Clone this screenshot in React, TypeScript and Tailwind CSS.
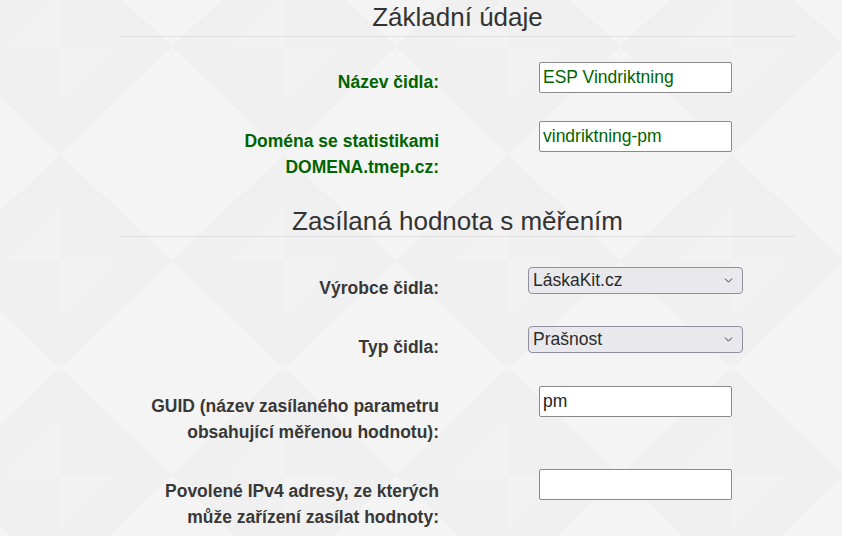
import { ChevronDown } from 'lucide-react'

type Row = {
  label: string[]
  kind: 'input' | 'select'
  value: string
  gap?: string
}

const basic: Row[] = [
  { label: ['Název čidla:'], kind: 'input', value: 'ESP Vindriktning' },
  { label: ['Doména se statistikami', 'DOMENA.tmep.cz:'], kind: 'input', value: 'vindriktning-pm' },
]

const measured: Row[] = [
  { label: ['Výrobce čidla:'], kind: 'select', value: 'LáskaKit.cz' },
  { label: ['Typ čidla:'], kind: 'select', value: 'Prašnost' },
  { label: ['GUID (název zasílaného parametru', 'obsahující měřenou hodnotu):'], kind: 'input', value: 'pm' },
  { label: ['Povolené IPv4 adresy, ze kterých', 'může zařízení zasílat hodnoty:'], kind: 'input', value: '', gap: 'mt-[7px]' },
]

function Backdrop() {
  return (
    <svg className="absolute inset-0 h-full w-full" aria-hidden="true">
      <defs>
        <pattern id="tiles" width="224" height="214" patternUnits="userSpaceOnUse" x="60" y="47">
          <rect width="224" height="214" fill="#f0f0f0" />
          <polygon points="112,0 224,107 112,214 0,107" fill="#f4f4f4" />
          <polygon points="0,0 56,0 0,54" fill="#f2f2f2" />
          <polygon points="224,214 168,214 224,160" fill="#f2f2f2" />
        </pattern>
      </defs>
      <rect width="100%" height="100%" fill="url(#tiles)" />
    </svg>
  )
}

function FormRow({ row, green }: { row: Row; green?: boolean }) {
  return (
    <div className="flex">
      <div
        className={`w-[319px] shrink-0 pt-[16px] pb-[17px] text-right text-[17.5px] font-bold leading-[26px] ${
          green ? 'text-[#006400]' : 'text-[#383838]'
        }`}
      >
        {row.label.map((line) => (
          <div key={line}>{line}</div>
        ))}
      </div>
      <div className="ml-[37px] flex w-[319px] shrink-0 justify-center">
        {row.kind === 'input' ? (
          <input
            type="text"
            defaultValue={row.value}
            className={`${row.gap ?? 'mt-[9px]'} h-[31px] w-[193px] rounded-[2px] border border-[#8a8a8a] bg-white px-[3px] text-[17.5px] outline-none ${
              green ? 'text-[#006400]' : 'text-[#222]'
            }`}
          />
        ) : (
          <div className="relative mt-[8px] h-[27px] w-[215px]">
            <select
              defaultValue={row.value}
              className="h-full w-full appearance-none rounded-[4px] border border-[#8f8f9d] bg-[#e9e9ed] pl-[4px] text-[17.5px] leading-none text-[#2b2b2b] outline-none"
            >
              <option>{row.value}</option>
            </select>
            <ChevronDown
              className="pointer-events-none absolute right-[8px] top-[7px] h-[13px] w-[13px] text-[#333]"
              strokeWidth={1.8}
            />
          </div>
        )}
      </div>
    </div>
  )
}

function Heading({ children, pad }: { children: string; pad: string }) {
  return (
    <h2
      className={`border-b border-[#e0e0e0] ${pad} text-center text-[26px] font-normal leading-[30px] text-[#333]`}
    >
      {children}
    </h2>
  )
}

export default function App() {
  return (
    <div className="relative h-[536px] w-[842px] overflow-hidden font-['Liberation_Sans',Arial,sans-serif]">
      <Backdrop />
      <div className="relative ml-[120px] w-[675px]">
        <Heading pad="pt-[2px] pb-[4px]">Základní údaje</Heading>
        <div className="mt-[16px]">
          {basic.map((row) => (
            <FormRow key={row.value} row={row} green />
          ))}
        </div>
        <div className="mt-[3px]">
          <Heading pad="pt-[6px] pb-[0px]">Zasílaná hodnota s měřením</Heading>
        </div>
        <div className="mt-[22px]">
          {measured.map((row) => (
            <FormRow key={row.label[0]} row={row} />
          ))}
        </div>
      </div>
    </div>
  )
}
